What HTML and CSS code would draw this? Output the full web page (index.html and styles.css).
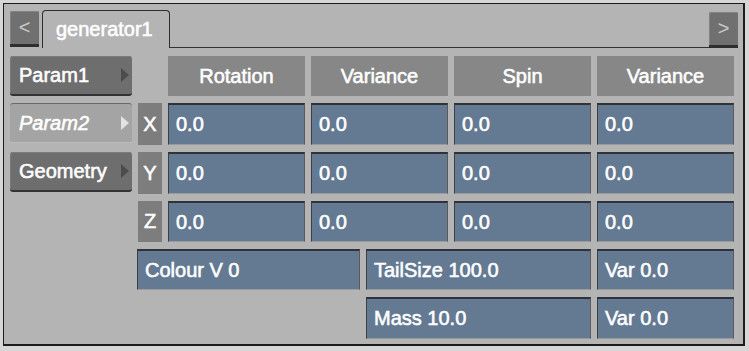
FILE: index.html
```html
<!DOCTYPE html>
<html>
<head>
<meta charset="utf-8">
<link rel="stylesheet" href="styles.css">
</head>
<body>
<div class="frame">
  <div class="tabbar">
    <div class="nav nav-left">&lt;</div>
    <div class="tab">generator1</div>
    <div class="tabline"></div>
    <div class="nav nav-right">&gt;</div>
  </div>
  <div class="grid">
    <div class="pbtn r1"><span>Param1</span><i class="arrow"></i></div>
    <div class="pbtn sel r2"><span>Param2</span><i class="arrow"></i></div>
    <div class="pbtn r3"><span>Geometry</span><i class="arrow"></i></div>

    <div class="head c3 r1">Rotation</div>
    <div class="head c4 r1">Variance</div>
    <div class="head c5 r1">Spin</div>
    <div class="head c6 r1">Variance</div>

    <div class="axis r2">X</div>
    <div class="field c3 r2">0.0</div>
    <div class="field c4 r2">0.0</div>
    <div class="field c5 r2">0.0</div>
    <div class="field c6 r2">0.0</div>

    <div class="axis r3">Y</div>
    <div class="field c3 r3">0.0</div>
    <div class="field c4 r3">0.0</div>
    <div class="field c5 r3">0.0</div>
    <div class="field c6 r3">0.0</div>

    <div class="axis r4">Z</div>
    <div class="field c3 r4">0.0</div>
    <div class="field c4 r4">0.0</div>
    <div class="field c5 r4">0.0</div>
    <div class="field c6 r4">0.0</div>

    <div class="bottom r5">
      <div class="field w1">Colour V 0</div>
      <div class="field w2">TailSize 100.0</div>
      <div class="field w3">Var 0.0</div>
    </div>
    <div class="bottom r6">
      <div class="spacer w1"></div>
      <div class="field w2">Mass 10.0</div>
      <div class="field w3">Var 0.0</div>
    </div>
  </div>
</div>
</body>
</html>
```
FILE: styles.css
```css
html, body {
  margin: 0;
  padding: 0;
  background: #d6d6d6;
}
body {
  padding: 3px;
  font-family: "Liberation Sans", Arial, sans-serif;
  font-size: 20px;
  color: #fff;
}
.frame {
  width: 739px;
  height: 340px;
  background: #b4b4b4;
  border: 1px solid #1c1c1c;
  border-right-width: 2px;
  border-bottom-width: 2px;
  box-sizing: content-box;
}
.tabbar {
  display: flex;
  align-items: flex-end;
  height: 44px;
  padding-left: 6px;
  padding-right: 5px;
}
.nav {
  width: 29px;
  height: 33px;
  background: #707070;
  border-bottom: 3px solid #2e2e2e;
  border-radius: 2px 2px 0 0;
  color: #c8c8c8;
  font-size: 20px;
  display: flex;
  align-items: center;
  justify-content: center;
  box-shadow: inset 1px 1px 0 #828282;
}
.nav-left {
  margin-bottom: 1px;
}
.tab {
  margin-left: 3px;
  width: 128px;
  height: 38px;
  border: 1px solid #2e2e2e;
  border-bottom: none;
  border-radius: 4px 4px 0 0;
  padding-left: 13px;
  box-sizing: border-box;
  display: flex;
  align-items: center;
  -webkit-text-stroke: 0.55px #fff;
}
.tabline {
  flex: 1;
  height: 1px;
  background: #333;
  align-self: flex-end;
}
.grid {
  display: grid;
  grid-template-columns: 122px 24px repeat(4, 137px);
  grid-template-rows: 40px 42px 42px 41px 41px 42px;
  column-gap: 6px;
  row-gap: 7px;
  padding: 8px 0 0 6px;
}
.r1 { grid-row: 1; }
.r2 { grid-row: 2; }
.r3 { grid-row: 3; }
.r4 { grid-row: 4; }
.r5 { grid-row: 5; }
.r6 { grid-row: 6; }
.c3 { grid-column: 3; }
.c4 { grid-column: 4; }
.c5 { grid-column: 5; }
.c6 { grid-column: 6; }

.pbtn {
  grid-column: 1;
  height: 40px;
  box-sizing: border-box;
  background: #6e6e6e;
  border-radius: 3px;
  border-bottom: 2px solid #333;
  box-shadow: inset 1px 1px 0 #7c7c7c;
  display: flex;
  align-items: center;
  justify-content: space-between;
  padding: 0 3px 0 9px;
  -webkit-text-stroke: 0.55px #fff;
}
.pbtn.sel {
  background: #a4a4a4;
  border-bottom: 1px solid #bbb;
  border-top: 1px solid #6a6a6a;
  box-shadow: none;
  font-style: italic;
}
.arrow {
  width: 0;
  height: 0;
  border-left: 8px solid #4c4c4c;
  border-top: 7px solid transparent;
  border-bottom: 7px solid transparent;
}
.pbtn.sel .arrow {
  border-left-color: #e2e2e2;
}
.head {
  background: #878787;
  display: flex;
  align-items: center;
  justify-content: center;
  -webkit-text-stroke: 0.55px #fff;
}
.axis {
  grid-column: 2;
  background: #7d7d7d;
  display: flex;
  align-items: center;
  justify-content: center;
  -webkit-text-stroke: 0.55px #fff;
}
.field {
  background: #647a93;
  box-sizing: border-box;
  border-top: 2px solid #2f3236;
  border-left: 1px solid #3d3f42;
  border-right: 1px solid #5a5a5a;
  border-bottom: 1px solid #9a9a9a;
  display: flex;
  align-items: center;
  padding-left: 7px;
  -webkit-text-stroke: 0.55px #fff;
}
.bottom {
  grid-column: 2 / 7;
  display: flex;
  gap: 6px;
  margin-left: -1px;
}
.w1 { width: 223px; }
.w2 { width: 225px; }
.w3 { width: 137px; }
.spacer { flex: none; }
```
